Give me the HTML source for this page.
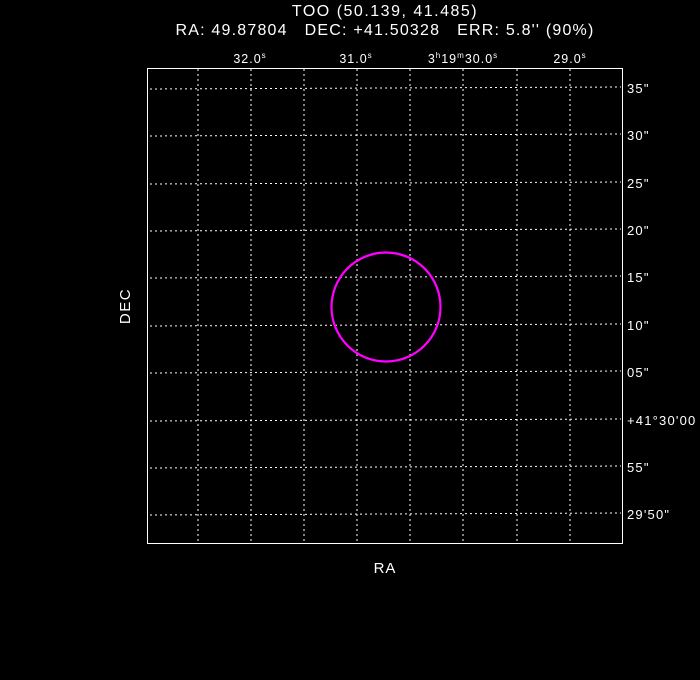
<!DOCTYPE html>
<html><head><style>
html,body{margin:0;padding:0;background:#000;width:700px;height:680px;overflow:hidden}
svg text{font-family:"Liberation Sans",sans-serif;fill:#fff;white-space:pre}
</style></head><body>
<svg width="700" height="680" viewBox="0 0 700 680" xmlns="http://www.w3.org/2000/svg" xml:space="preserve">
<rect x="0" y="0" width="700" height="680" fill="#000"/>
<text x="385" y="16" font-size="16" letter-spacing="1.5" text-anchor="middle">TOO (50.139, 41.485)</text>
<text x="385" y="35" font-size="16" letter-spacing="1.2" text-anchor="middle">RA: 49.87804   DEC: +41.50328   ERR: 5.8'' (90%)</text>
<g font-size="12.5" letter-spacing="1">
<text x="250" y="63" text-anchor="middle">32.0<tspan font-size="8" dy="-5">s</tspan></text>
<text x="356" y="63" text-anchor="middle">31.0<tspan font-size="8" dy="-5">s</tspan></text>
<text x="463" y="63" text-anchor="middle">3<tspan font-size="8" dy="-5">h</tspan><tspan dy="5">19</tspan><tspan font-size="8" dy="-5">m</tspan><tspan dy="5">30.0</tspan><tspan font-size="8" dy="-5">s</tspan></text>
<text x="570" y="63" text-anchor="middle">29.0<tspan font-size="8" dy="-5">s</tspan></text>
</g>
<g stroke="#fff" stroke-width="1" stroke-dasharray="2,3" fill="none">
<line x1="198" y1="69" x2="198" y2="542"/>
<line x1="251" y1="69" x2="251" y2="542"/>
<line x1="304" y1="69" x2="304" y2="542"/>
<line x1="357" y1="69" x2="357" y2="542"/>
<line x1="410" y1="69" x2="410" y2="542"/>
<line x1="463" y1="69" x2="463" y2="542"/>
<line x1="517" y1="69" x2="517" y2="542"/>
<line x1="570" y1="69" x2="570" y2="542"/>
<line x1="150" y1="89" x2="621" y2="87"/>
<line x1="150" y1="136" x2="621" y2="134"/>
<line x1="150" y1="184" x2="621" y2="182"/>
<line x1="150" y1="231" x2="621" y2="229"/>
<line x1="150" y1="278" x2="621" y2="276"/>
<line x1="150" y1="326" x2="621" y2="324"/>
<line x1="150" y1="373" x2="621" y2="371"/>
<line x1="150" y1="421" x2="621" y2="419"/>
<line x1="150" y1="468" x2="621" y2="466"/>
<line x1="150" y1="515" x2="621" y2="513"/>
</g>
<rect x="147.5" y="68.5" width="475" height="475" stroke="#fff" stroke-width="1" fill="none"/>
<circle cx="386" cy="307" r="54.5" stroke="#ff00ff" stroke-width="2.2" fill="none"/>
<g font-size="13" letter-spacing="1.2">
<text x="627" y="93">35"</text>
<text x="627" y="140">30"</text>
<text x="627" y="188">25"</text>
<text x="627" y="235">20"</text>
<text x="627" y="282">15"</text>
<text x="627" y="330">10"</text>
<text x="627" y="377">05"</text>
<text x="627" y="425">+41°30'00</text>
<text x="627" y="472">55"</text>
<text x="627" y="519">29'50"</text>
</g>
<text x="385" y="573" font-size="15" letter-spacing="1" text-anchor="middle">RA</text>
<text x="0" y="0" font-size="15" letter-spacing="1.5" text-anchor="middle" transform="translate(130,306) rotate(-90)">DEC</text>
</svg>
</body></html>
